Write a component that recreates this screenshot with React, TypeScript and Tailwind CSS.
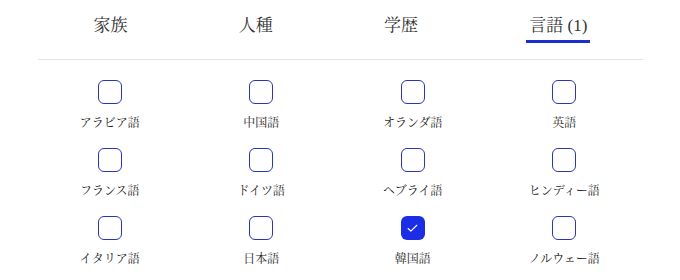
import { Check } from 'lucide-react';

const tabs = [
  { label: '家族', active: false },
  { label: '人種', active: false },
  { label: '学歴', active: false },
  { label: '言語 (1)', active: true },
];

const languages = [
  { name: 'アラビア語', checked: false },
  { name: '中国語', checked: false },
  { name: 'オランダ語', checked: false },
  { name: '英語', checked: false },
  { name: 'フランス語', checked: false },
  { name: 'ドイツ語', checked: false },
  { name: 'ヘブライ語', checked: false },
  { name: 'ヒンディー語', checked: false },
  { name: 'イタリア語', checked: false },
  { name: '日本語', checked: false },
  { name: '韓国語', checked: true },
  { name: 'ノルウェー語', checked: false },
];

function LanguageOption({ name, checked }: { name: string; checked: boolean }) {
  return (
    <label className="flex flex-col items-center gap-[10px]">
      <span
        className={
          checked
            ? 'flex h-[24px] w-[24px] items-center justify-center rounded-[6px] bg-[#1b2ee6] text-white'
            : 'h-[24px] w-[24px] rounded-[6px] border-[1.5px] border-[#2b36b5] bg-white'
        }
      >
        {checked && <Check size={13} strokeWidth={2} />}
      </span>
      <span className="text-[12px] leading-[18px] text-[#222]">{name}</span>
    </label>
  );
}

export default function App() {
  return (
    <div className="h-[280px] w-[680px] overflow-hidden bg-white pl-[38px] pr-[37px] font-['Liberation_Serif','Noto_Serif_CJK_JP','Noto_Sans_CJK_JP',serif]">
      <nav className="flex justify-around border-b border-[#e3e3e3] pt-[14px] pb-[16px]">
        {tabs.map((tab) => (
          <button
            key={tab.label}
            className={
              tab.active
                ? 'border-b-[3px] border-[#1c2ecc] px-[3px] pb-[2px] text-[17px] leading-[24px] text-[#333]'
                : 'border-b-[3px] border-transparent px-[3px] pb-[2px] text-[17px] leading-[24px] text-[#333]'
            }
          >
            {tab.label}
          </button>
        ))}
      </nav>

      <div className="grid grid-cols-4 gap-x-[8px] gap-y-[16px] pt-[20px] pr-[7px]">
        {languages.map((lang) => (
          <LanguageOption key={lang.name} name={lang.name} checked={lang.checked} />
        ))}
      </div>
    </div>
  );
}
